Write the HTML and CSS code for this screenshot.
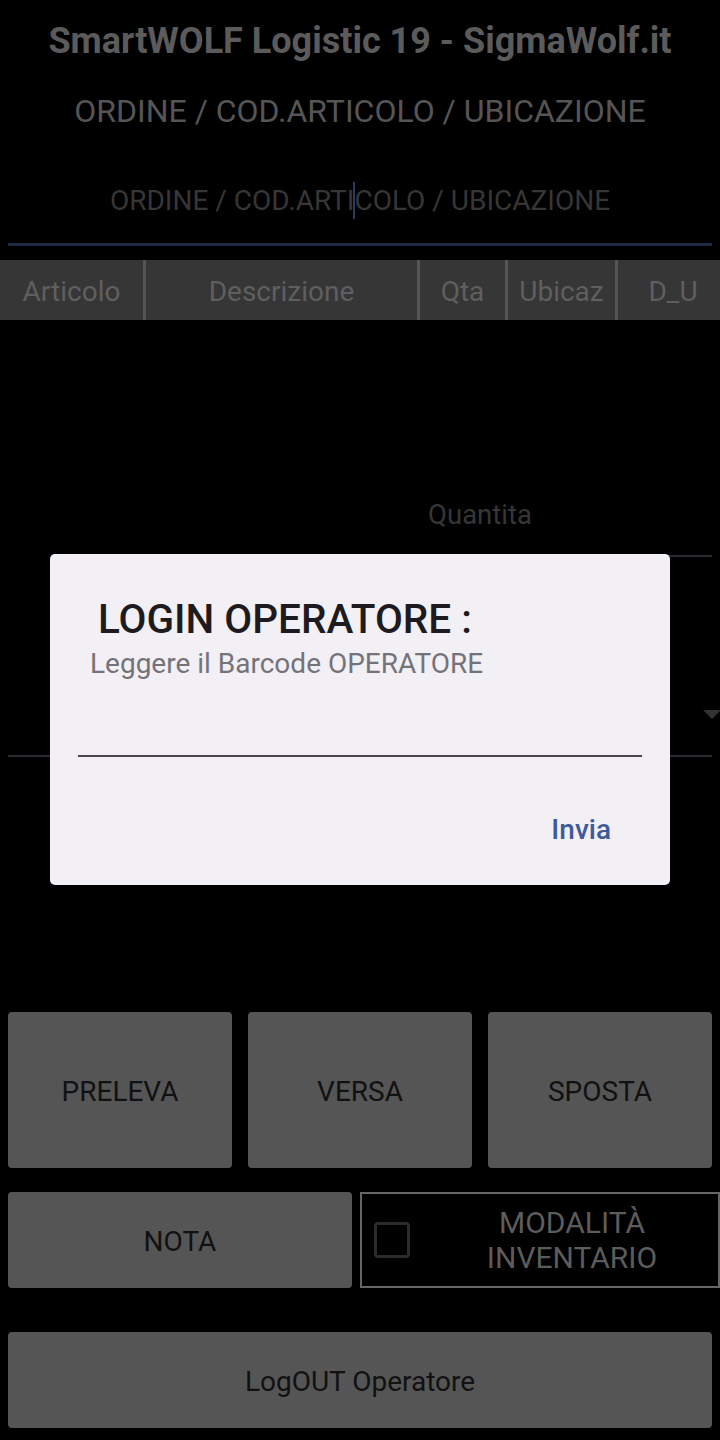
FILE: index.html
```html
<!DOCTYPE html>
<html lang="it">
<head>
<meta charset="utf-8">
<title>SmartWOLF Logistic 19</title>
<link rel="stylesheet" href="styles.css">
</head>
<body>
<div class="app">
  <h1 class="title">SmartWOLF Logistic 19 - SigmaWolf.it</h1>
  <div class="subtitle">ORDINE / COD.ARTICOLO / UBICAZIONE</div>
  <div class="search">
    <span class="hint">ORDINE / COD.ARTI<span class="cursor"></span>COLO / UBICAZIONE</span>
  </div>
  <div class="table-head">
    <div class="th">Articolo</div>
    <div class="th">Descrizione</div>
    <div class="th">Qta</div>
    <div class="th">Ubicaz</div>
    <div class="th last">D_U</div>
  </div>
  <div class="list"></div>
  <div class="qty-row">
    <div class="qty-field"><span class="qty-hint">Quantita</span></div>
  </div>
  <div class="spinner">
    <span class="spinner-arrow"></span>
  </div>
  <div class="actions">
    <div class="row3">
      <button class="btn tall">PRELEVA</button>
      <button class="btn tall">VERSA</button>
      <button class="btn tall">SPOSTA</button>
    </div>
    <div class="row2">
      <button class="btn mid">NOTA</button>
      <label class="check">
        <span class="box"></span>
        <span class="check-text">MODALITÀ<br>INVENTARIO</span>
      </label>
    </div>
    <button class="btn mid wide">LogOUT Operatore</button>
  </div>
</div>

<div class="overlay">
  <div class="dialog">
    <div class="dlg-title">LOGIN OPERATORE :</div>
    <div class="dlg-msg">Leggere il Barcode OPERATORE</div>
    <div class="dlg-input"></div>
    <div class="dlg-actions">
      <button class="dlg-btn">Invia</button>
    </div>
  </div>
</div>
</body>
</html>
```

FILE: styles.css
```css
* { box-sizing: border-box; }
html, body {
  margin: 0;
  padding: 0;
  background: #000;
}
body {
  width: 720px;
  height: 1440px;
  overflow: hidden;
  position: relative;
  font-family: Roboto, "Noto Sans", sans-serif;
}
.app {
  display: flex;
  flex-direction: column;
}
.title {
  margin: 18px 0 0;
  font-size: 36px;
  line-height: 46px;
  font-weight: 700;
  color: #5b5b5b;
  text-align: center;
}
.subtitle {
  margin-top: 25px;
  font-size: 32px;
  line-height: 44px;
  color: #555;
  text-align: center;
}
.search {
  margin: 27px 8px 0;
  padding-top: 21px;
  padding-bottom: 22px;
  border-bottom: 3px solid #1f2a44;
  text-align: center;
}
.hint {
  font-size: 28px;
  line-height: 40px;
  color: #363636;
}
.cursor {
  display: inline-block;
  width: 2px;
  height: 37px;
  background: #2b3a5e;
  vertical-align: -9px;
  margin: 0 -1px;
}
.table-head {
  margin-top: 14px;
  height: 60px;
  display: grid;
  grid-template-columns: 143px 271px 85px 107px 1fr;
  column-gap: 3px;
  background: #555;
}
.th {
  background: #363636;
  color: #5f5f5f;
  font-size: 28px;
  line-height: 60px;
  padding-top: 2px;
  text-align: center;
  white-space: nowrap;
  overflow: hidden;
}
.th.last { padding-left: 8px; }
.list { height: 173px; }
.qty-row {
  display: flex;
  justify-content: flex-end;
  padding: 0 8px;
}
.qty-field {
  width: 464px;
  height: 64px;
  padding-top: 3px;
  border-bottom: 2px solid #2a2930;
  text-align: center;
}
.qty-hint {
  font-size: 27.5px;
  line-height: 38px;
  color: #363636;
}
.spinner {
  margin: 0 8px;
  height: 200px;
  border-bottom: 2px solid #2a2930;
  position: relative;
}
.spinner-arrow {
  position: absolute;
  right: -9px;
  top: 153px;
  width: 0;
  height: 0;
  border-left: 9px solid transparent;
  border-right: 9px solid transparent;
  border-top: 9px solid #333;
}
.actions {
  margin-top: 255px;
  padding: 0 8px;
  display: flex;
  flex-direction: column;
}
.row3 {
  display: grid;
  grid-template-columns: repeat(3, 1fr);
  column-gap: 16px;
}
.row2 {
  margin-top: 24px;
  display: flex;
  gap: 8px;
  margin-right: -8px;
}
.btn {
  border: none;
  background: #555;
  border-radius: 4px;
  color: #111;
  font-family: Roboto, "Noto Sans", sans-serif;
  font-size: 28px;
  padding: 2px 0 0;
  cursor: pointer;
}
.btn.tall { height: 156px; }
.btn.mid { height: 96px; }
.row2 .btn { width: 344px; flex: none; }
.btn.wide { margin-top: 44px; width: 100%; }
.check {
  flex: 1;
  height: 96px;
  border: 2px solid #666;
  display: flex;
  align-items: center;
}
.box {
  flex: none;
  width: 36px;
  height: 36px;
  margin-left: 12px;
  border: 3px solid #2b2b2f;
  border-radius: 4px;
}
.check-text {
  flex: 1;
  padding-left: 16px;
  text-align: center;
  font-size: 30px;
  line-height: 35px;
  color: #5c5c5c;
}
.overlay {
  position: absolute;
  inset: 0;
}
.dialog {
  position: absolute;
  left: 50px;
  top: 554px;
  width: 620px;
  height: 331px;
  background: #f2f0f5;
  border-radius: 5px;
  padding-top: 42px;
  display: flex;
  flex-direction: column;
}
.dlg-title {
  padding-left: 48px;
  font-size: 40.5px;
  line-height: 46px;
  font-weight: 500;
  color: #1d1b20;
}
.dlg-msg {
  margin-top: 6px;
  padding-left: 40px;
  font-size: 28px;
  line-height: 32px;
  color: #75737a;
}
.dlg-input {
  margin: 27px 28px 0;
  height: 50px;
  border-bottom: 2px solid #49454f;
}
.dlg-actions {
  margin-top: 53px;
  display: flex;
  justify-content: flex-end;
  padding-right: 59px;
}
.dlg-btn {
  border: none;
  background: transparent;
  padding: 0;
  font-family: Roboto, "Noto Sans", sans-serif;
  font-size: 28px;
  line-height: 40px;
  font-weight: 500;
  color: #3f5a9a;
}
```
